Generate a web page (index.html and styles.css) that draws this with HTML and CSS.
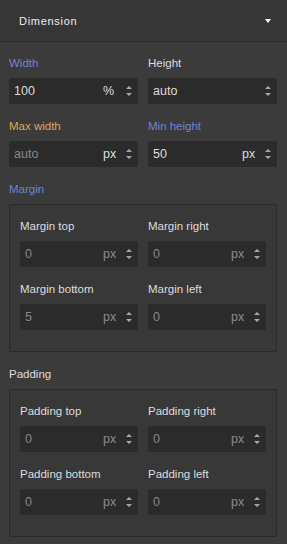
FILE: index.html
```html
<!DOCTYPE html>
<html lang="en">
<head>
    <meta charset="utf-8" />
    <title>Style manager</title>
    <link rel="stylesheet" href="styles.css">
</head>
<body>
    <div class="sector">
        <div class="sector_title">
            <span>Dimension</span>
            <i class="caret"></i>
        </div>
        <div class="sector_props">
            <div class="prop">
                <div class="label label_set">Width</div>
                <div class="field">
                    <input type="text" value="100" />
                    <span class="unit">%</span>
                    <span class="arrows"><i class="up"></i><i class="down"></i></span>
                </div>
            </div>
            <div class="prop">
                <div class="label">Height</div>
                <div class="field">
                    <input type="text" value="auto" />
                    <span class="arrows"><i class="up"></i><i class="down"></i></span>
                </div>
            </div>
            <div class="prop">
                <div class="label label_parent">Max width</div>
                <div class="field">
                    <input type="text" placeholder="auto" />
                    <span class="unit">px</span>
                    <span class="arrows"><i class="up"></i><i class="down"></i></span>
                </div>
            </div>
            <div class="prop">
                <div class="label label_set">Min height</div>
                <div class="field">
                    <input type="text" value="50" />
                    <span class="unit">px</span>
                    <span class="arrows"><i class="up"></i><i class="down"></i></span>
                </div>
            </div>

            <div class="prop prop_full">
                <div class="label label_set">Margin</div>
                <div class="composite">
                    <div class="prop">
                        <div class="label">Margin top</div>
                        <div class="field">
                            <input type="text" placeholder="0" />
                            <span class="unit unit_dim">px</span>
                            <span class="arrows"><i class="up"></i><i class="down"></i></span>
                        </div>
                    </div>
                    <div class="prop">
                        <div class="label">Margin right</div>
                        <div class="field">
                            <input type="text" placeholder="0" />
                            <span class="unit unit_dim">px</span>
                            <span class="arrows"><i class="up"></i><i class="down"></i></span>
                        </div>
                    </div>
                    <div class="prop">
                        <div class="label">Margin bottom</div>
                        <div class="field">
                            <input type="text" placeholder="5" />
                            <span class="unit unit_dim">px</span>
                            <span class="arrows"><i class="up"></i><i class="down"></i></span>
                        </div>
                    </div>
                    <div class="prop">
                        <div class="label">Margin left</div>
                        <div class="field">
                            <input type="text" placeholder="0" />
                            <span class="unit unit_dim">px</span>
                            <span class="arrows"><i class="up"></i><i class="down"></i></span>
                        </div>
                    </div>
                </div>
            </div>

            <div class="prop prop_full">
                <div class="label">Padding</div>
                <div class="composite">
                    <div class="prop">
                        <div class="label">Padding top</div>
                        <div class="field">
                            <input type="text" placeholder="0" />
                            <span class="unit unit_dim">px</span>
                            <span class="arrows"><i class="up"></i><i class="down"></i></span>
                        </div>
                    </div>
                    <div class="prop">
                        <div class="label">Padding right</div>
                        <div class="field">
                            <input type="text" placeholder="0" />
                            <span class="unit unit_dim">px</span>
                            <span class="arrows"><i class="up"></i><i class="down"></i></span>
                        </div>
                    </div>
                    <div class="prop">
                        <div class="label">Padding bottom</div>
                        <div class="field">
                            <input type="text" placeholder="0" />
                            <span class="unit unit_dim">px</span>
                            <span class="arrows"><i class="up"></i><i class="down"></i></span>
                        </div>
                    </div>
                    <div class="prop">
                        <div class="label">Padding left</div>
                        <div class="field">
                            <input type="text" placeholder="0" />
                            <span class="unit unit_dim">px</span>
                            <span class="arrows"><i class="up"></i><i class="down"></i></span>
                        </div>
                    </div>
                </div>
            </div>
        </div>
    </div>
</body>
</html>
```

FILE: styles.css
```css
body {
    margin: 0;
    font: 11px "Liberation Sans", Arial, sans-serif;
    background-color: #3b3b3b;
    color: #dddddd;
    height: 544px;
    overflow: hidden;
}

.sector_title {
    height: 41px;
    line-height: 40px;
    padding: 0 16px 0 19px;
    background-color: #363636;
    border-bottom: 1px solid #2a2a2a;
    display: flex;
    align-items: center;
    justify-content: space-between;
    letter-spacing: 0.7px;
    color: #eeeeee;
}

.caret {
    width: 0;
    height: 0;
    border-left: 3px solid transparent;
    border-right: 3px solid transparent;
    border-top: 4px solid #ffffff;
    margin-top: 1px;
}

.sector_props {
    padding: 14px 10px 0 9px;
    display: grid;
    grid-template-columns: minmax(0, 1fr) minmax(0, 1fr);
    column-gap: 10px;
    row-gap: 15px;
}

.prop {
    min-width: 0;
}

.prop_full {
    grid-column: 1 / 3;
}

.label {
    font-size: 11.5px;
    line-height: 15px;
    margin-bottom: 7px;
    color: #dddddd;
    white-space: nowrap;
}

.label_set {
    color: #7082d8;
}

.label_parent {
    color: #dca855;
}

.composite {
    background-color: #383838;
    border: 1px solid #2a2a2a;
    border-radius: 2px;
    padding: 14px 10px 6px 10px;
    display: grid;
    grid-template-columns: minmax(0, 1fr) minmax(0, 1fr);
    column-gap: 10px;
}

.composite .prop {
    margin-bottom: 15px;
}

.field {
    height: 26px;
    background-color: #2b2b2b;
    border-radius: 2px;
    display: flex;
    align-items: center;
    font-size: 12.5px;
}

.field input {
    flex: 1;
    width: 0;
    min-width: 0;
    background: transparent;
    border: none;
    outline: none;
    padding: 0 0 0 5px;
    font: inherit;
    color: #dddddd;
}

.field input::placeholder {
    color: #888888;
}

.unit {
    min-width: 14px;
    margin-right: 8px;
    color: #dddddd;
}

.unit_dim {
    color: #8c8c8c;
}

.arrows {
    display: flex;
    flex-direction: column;
    align-items: center;
    gap: 4px;
    width: 7px;
    margin: 0 6px 1px 0;
}

.up,
.down {
    width: 0;
    height: 0;
    border-left: 3px solid transparent;
    border-right: 3px solid transparent;
}

.up {
    border-bottom: 3px solid #a8a8a8;
}

.down {
    border-top: 3px solid #a8a8a8;
}
```
